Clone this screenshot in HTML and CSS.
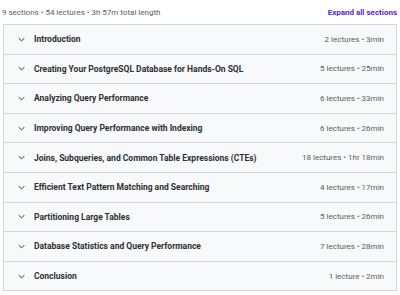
FILE: index.html
```html
<!DOCTYPE html>
<html lang="en">
<head>
    <meta charset="UTF-8">
    <meta name="viewport" content="width=device-width, initial-scale=1.0">
    <title>Course content</title>
    <link rel="stylesheet" href="styles.css">
</head>
<body>
    <div class="curriculum">
        <!-- Summary line -->
        <div class="summary">
            <span class="summary-text">9 sections • 54 lectures • 3h 57m total length</span>
            <button class="expand-btn">Expand all sections</button>
        </div>

        <!-- Sections -->
        <div class="sections">
            <div class="section">
                <span class="chevron"><svg viewBox="0 0 10 6" width="7" height="5"><path d="M1 1l4 4 4-4" fill="none" stroke="currentColor" stroke-width="1.4"/></svg></span>
                <span class="section-title">Introduction</span>
                <span class="section-meta">2 lectures • 3min</span>
            </div>
            <div class="section">
                <span class="chevron"><svg viewBox="0 0 10 6" width="7" height="5"><path d="M1 1l4 4 4-4" fill="none" stroke="currentColor" stroke-width="1.4"/></svg></span>
                <span class="section-title">Creating Your PostgreSQL Database for Hands-On SQL</span>
                <span class="section-meta">5 lectures • 25min</span>
            </div>
            <div class="section">
                <span class="chevron"><svg viewBox="0 0 10 6" width="7" height="5"><path d="M1 1l4 4 4-4" fill="none" stroke="currentColor" stroke-width="1.4"/></svg></span>
                <span class="section-title">Analyzing Query Performance</span>
                <span class="section-meta">6 lectures • 33min</span>
            </div>
            <div class="section">
                <span class="chevron"><svg viewBox="0 0 10 6" width="7" height="5"><path d="M1 1l4 4 4-4" fill="none" stroke="currentColor" stroke-width="1.4"/></svg></span>
                <span class="section-title">Improving Query Performance with Indexing</span>
                <span class="section-meta">6 lectures • 26min</span>
            </div>
            <div class="section">
                <span class="chevron"><svg viewBox="0 0 10 6" width="7" height="5"><path d="M1 1l4 4 4-4" fill="none" stroke="currentColor" stroke-width="1.4"/></svg></span>
                <span class="section-title">Joins, Subqueries, and Common Table Expressions (CTEs)</span>
                <span class="section-meta">18 lectures • 1hr 18min</span>
            </div>
            <div class="section">
                <span class="chevron"><svg viewBox="0 0 10 6" width="7" height="5"><path d="M1 1l4 4 4-4" fill="none" stroke="currentColor" stroke-width="1.4"/></svg></span>
                <span class="section-title">Efficient Text Pattern Matching and Searching</span>
                <span class="section-meta">4 lectures • 17min</span>
            </div>
            <div class="section">
                <span class="chevron"><svg viewBox="0 0 10 6" width="7" height="5"><path d="M1 1l4 4 4-4" fill="none" stroke="currentColor" stroke-width="1.4"/></svg></span>
                <span class="section-title">Partitioning Large Tables</span>
                <span class="section-meta">5 lectures • 26min</span>
            </div>
            <div class="section">
                <span class="chevron"><svg viewBox="0 0 10 6" width="7" height="5"><path d="M1 1l4 4 4-4" fill="none" stroke="currentColor" stroke-width="1.4"/></svg></span>
                <span class="section-title">Database Statistics and Query Performance</span>
                <span class="section-meta">7 lectures • 28min</span>
            </div>
            <div class="section">
                <span class="chevron"><svg viewBox="0 0 10 6" width="7" height="5"><path d="M1 1l4 4 4-4" fill="none" stroke="currentColor" stroke-width="1.4"/></svg></span>
                <span class="section-title">Conclusion</span>
                <span class="section-meta">1 lecture • 2min</span>
            </div>
        </div>
    </div>
</body>
</html>
```

FILE: styles.css
```css
/* Base */
:root {
    --ink: #2d2f31;
    --muted: #595c5f;
    --purple: #5624d0;
    --row-bg: #f7f9fa;
    --border: #d1d7dc;
}

body {
    margin: 0;
    background: #fff;
    font-family: Roboto, "Liberation Sans", sans-serif;
    color: var(--ink);
}

.curriculum {
    padding: 4px 2px 0 2px;
}

/* Summary line */
.summary {
    display: flex;
    justify-content: space-between;
    align-items: center;
    height: 17px;
    padding: 0 1px 0 0;
    margin-bottom: 3px;
}

.summary-text {
    font-size: 8px;
    color: var(--muted);
}

.expand-btn {
    background: none;
    border: none;
    padding: 0;
    font-family: inherit;
    font-size: 8px;
    font-weight: 700;
    color: var(--purple);
    cursor: pointer;
}

/* Sections */
.sections {
    border: 1px solid var(--border);
    border-bottom: none;
    margin: 0 1px;
}

.section {
    display: flex;
    align-items: center;
    height: 28.6px;
    padding: 0 12px 0 14px;
    background: var(--row-bg);
    border-bottom: 1px solid var(--border);
}

.chevron {
    display: flex;
    width: 16px;
    color: var(--ink);
}

.section-title {
    flex: 1;
    font-size: 8.5px;
    font-weight: 700;
}

.section-meta {
    font-size: 8px;
    color: var(--muted);
}
```
